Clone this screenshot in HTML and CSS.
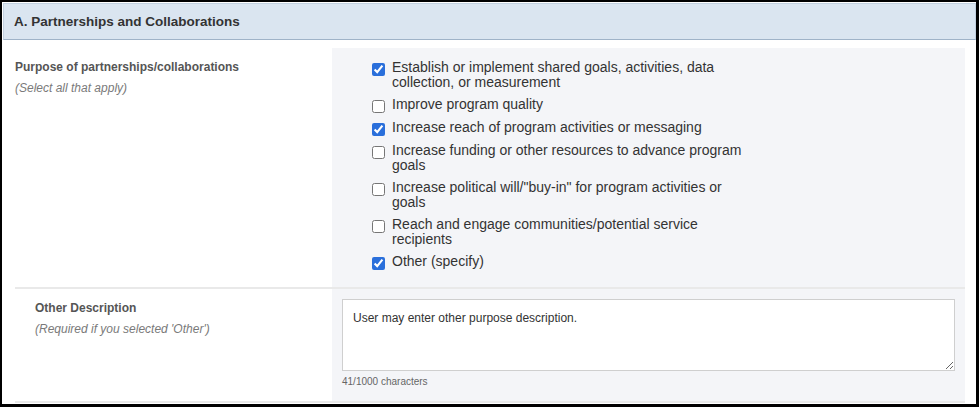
FILE: index.html
```html
<!DOCTYPE html>
<html lang="en">
<head>
<meta charset="utf-8">
<title>Partnerships and Collaborations</title>
<link rel="stylesheet" href="styles.css">
</head>
<body>
<div class="frame">
  <div class="section-header">A. Partnerships and Collaborations</div>
  <div class="section-body">
    <div class="row">
      <div class="label-col">
        <div class="label-title">Purpose of partnerships/collaborations</div>
        <div class="label-hint">(Select all that apply)</div>
      </div>
      <div class="field-col checks-col">
        <div class="checks">
          <label class="check"><input type="checkbox" checked><span>Establish or implement shared goals, activities, data collection, or measurement</span></label>
          <label class="check"><input type="checkbox"><span>Improve program quality</span></label>
          <label class="check"><input type="checkbox" checked><span>Increase reach of program activities or messaging</span></label>
          <label class="check"><input type="checkbox"><span>Increase funding or other resources to advance program goals</span></label>
          <label class="check"><input type="checkbox"><span>Increase political will/"buy-in" for program activities or goals</span></label>
          <label class="check"><input type="checkbox"><span>Reach and engage communities/potential service recipients</span></label>
          <label class="check"><input type="checkbox" checked><span>Other (specify)</span></label>
        </div>
      </div>
    </div>
    <div class="row">
      <div class="label-col nested">
        <div class="label-title">Other Description</div>
        <div class="label-hint">(Required if you selected 'Other')</div>
      </div>
      <div class="field-col text-col">
        <textarea class="desc">User may enter other purpose description.</textarea>
        <div class="counter">41/1000 characters</div>
      </div>
    </div>
  </div>
</div>
</body>
</html>
```
FILE: styles.css
```css
* { box-sizing: border-box; }
html, body { margin: 0; padding: 0; background: #fff; }
body {
  font-family: "Liberation Sans", Arial, sans-serif;
  color: #333;
}
.frame {
  width: 979px;
  height: 407px;
  border-style: solid;
  border-color: #000;
  border-width: 2px 3px 3px 2px;
  padding: 1px 0 1px 1px;
  overflow: hidden;
}
.section-header {
  background: #dae5f0;
  border: 1px solid #c2d1e0;
  border-bottom-color: #9fb3c8;
  padding: 9px 10px;
  font-size: 13.5px;
  line-height: 17px;
  font-weight: bold;
  color: #333;
}
.section-body {
  margin-top: 8px;
  padding: 0 11px 0 12px;
}
.row {
  display: grid;
  grid-template-columns: 317px 1fr;
  border-bottom: 2px solid #e9e9e9;
}
.label-col {
  padding-top: 10.5px;
}
.label-col.nested {
  padding-left: 20px;
}
.label-title {
  font-size: 12px;
  line-height: 16px;
  font-weight: bold;
  color: #555;
}
.label-hint {
  margin-top: 5px;
  font-size: 12px;
  line-height: 16px;
  font-style: italic;
  color: #7a7a7a;
}
.field-col {
  background: #f4f5f8;
}
.checks-col {
  padding: 12px 0 17px 40px;
}
.checks {
  display: flex;
  flex-direction: column;
  gap: 7px;
  width: 382px;
}
.check {
  display: flex;
  align-items: flex-start;
  font-size: 14px;
  line-height: 15px;
  color: #333;
}
.check input {
  flex: none;
  width: 13px;
  height: 13px;
  margin: 3px 7px 0 0;
  accent-color: #2a6fdb;
}
.text-col {
  padding: 10px 10px 12px 10px;
}
.desc {
  display: block;
  width: 100%;
  height: 72px;
  margin: 0;
  padding: 10px;
  border: 1px solid #cfcfcf;
  border-radius: 0;
  background: #fff;
  font-family: "Liberation Sans", Arial, sans-serif;
  font-size: 12px;
  line-height: 16px;
  color: #333;
  resize: vertical;
}
.counter {
  margin-top: 4px;
  font-size: 10px;
  line-height: 14px;
  color: #666;
}
```
